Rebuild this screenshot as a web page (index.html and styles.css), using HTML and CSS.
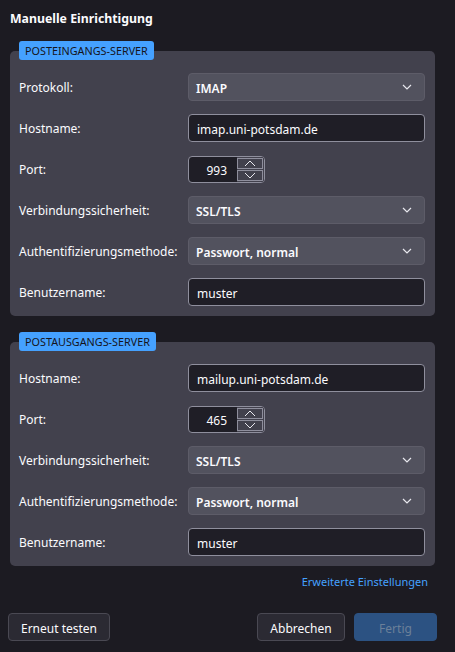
FILE: index.html
```html
<!DOCTYPE html>
<html lang="de">
<head>
<meta charset="utf-8">
<link rel="stylesheet" href="styles.css">
</head>
<body>
<div class="page">
  <h1 class="title">Manuelle Einrichtigung</h1>

  <section class="group">
    <span class="badge">POSTEINGANGS-SERVER</span>
    <div class="panel">
      <label class="label">Protokoll:</label>
      <div class="select"><span>IMAP</span><svg class="chev" width="10" height="6" viewBox="0 0 10 6"><path d="M1 1l4 4 4-4" fill="none" stroke="#e8e8ee" stroke-width="1.2"/></svg></div>

      <label class="label">Hostname:</label>
      <div class="input">imap.uni-potsdam.de</div>

      <label class="label">Port:</label>
      <div class="spin">
        <span class="spin-val">993</span>
        <span class="spin-btns">
          <span class="spin-btn"><svg width="12" height="7" viewBox="0 0 12 7"><path d="M1 6l5-5 5 5" fill="none" stroke="#e8e8ee" stroke-width="1"/></svg></span>
          <span class="spin-btn"><svg width="12" height="7" viewBox="0 0 12 7"><path d="M1 1l5 5 5-5" fill="none" stroke="#e8e8ee" stroke-width="1"/></svg></span>
        </span>
      </div>

      <label class="label">Verbindungssicherheit:</label>
      <div class="select"><span>SSL/TLS</span><svg class="chev" width="10" height="6" viewBox="0 0 10 6"><path d="M1 1l4 4 4-4" fill="none" stroke="#e8e8ee" stroke-width="1.2"/></svg></div>

      <label class="label">Authentifizierungsmethode:</label>
      <div class="select"><span>Passwort, normal</span><svg class="chev" width="10" height="6" viewBox="0 0 10 6"><path d="M1 1l4 4 4-4" fill="none" stroke="#e8e8ee" stroke-width="1.2"/></svg></div>

      <label class="label">Benutzername:</label>
      <div class="input">muster</div>
    </div>
  </section>

  <section class="group group-out">
    <span class="badge">POSTAUSGANGS-SERVER</span>
    <div class="panel">
      <label class="label">Hostname:</label>
      <div class="input">mailup.uni-potsdam.de</div>

      <label class="label">Port:</label>
      <div class="spin">
        <span class="spin-val">465</span>
        <span class="spin-btns">
          <span class="spin-btn"><svg width="12" height="7" viewBox="0 0 12 7"><path d="M1 6l5-5 5 5" fill="none" stroke="#e8e8ee" stroke-width="1"/></svg></span>
          <span class="spin-btn"><svg width="12" height="7" viewBox="0 0 12 7"><path d="M1 1l5 5 5-5" fill="none" stroke="#e8e8ee" stroke-width="1"/></svg></span>
        </span>
      </div>

      <label class="label">Verbindungssicherheit:</label>
      <div class="select"><span>SSL/TLS</span><svg class="chev" width="10" height="6" viewBox="0 0 10 6"><path d="M1 1l4 4 4-4" fill="none" stroke="#e8e8ee" stroke-width="1.2"/></svg></div>

      <label class="label">Authentifizierungsmethode:</label>
      <div class="select"><span>Passwort, normal</span><svg class="chev" width="10" height="6" viewBox="0 0 10 6"><path d="M1 1l4 4 4-4" fill="none" stroke="#e8e8ee" stroke-width="1.2"/></svg></div>

      <label class="label">Benutzername:</label>
      <div class="input">muster</div>
    </div>
  </section>

  <div class="link-row"><a class="link">Erweiterte Einstellungen</a></div>

  <div class="buttons">
    <button class="btn btn-retry">Erneut testen</button>
    <span class="spacer"></span>
    <button class="btn btn-cancel">Abbrechen</button>
    <button class="btn btn-primary">Fertig</button>
  </div>
</div>
</body>
</html>
```

FILE: styles.css
```css
* { box-sizing: border-box; }
html, body {
  margin: 0;
  padding: 0;
  background: #1c1b22;
  color: #fbfbfe;
  font-family: "Noto Sans", "Open Sans", sans-serif;
  font-size: 12px;
}
.page {
  width: 455px;
  height: 652px;
  padding: 10px 0 0 0;
  display: flex;
  flex-direction: column;
}
.title {
  margin: 0 0 13px 10px;
  font-size: 12.3px;
  font-weight: 700;
  line-height: 18px;
}
.group {
  display: flex;
  flex-direction: column;
  align-items: flex-start;
  margin: 0 20px 0 10px;
}
.group-out { margin-top: 16px; }
.badge {
  position: relative;
  z-index: 1;
  margin-left: 9px;
  margin-bottom: -9px;
  height: 19px;
  line-height: 19px;
  padding: 0 6px;
  border-radius: 3px;
  background: #45a1ff;
  color: #15141a;
  font-size: 10.8px;
  font-weight: 400;
}
.panel {
  align-self: stretch;
  background: #42414d;
  border-radius: 5px;
  padding: 22px 10px 10px 9px;
  display: grid;
  grid-template-columns: 169px 1fr;
  grid-auto-rows: 28px;
  row-gap: 13px;
  align-items: center;
}
.label {
  line-height: 18px;
  padding-top: 2px;
  white-space: nowrap;
}
.select {
  height: 28px;
  background: #52525e;
  border: 1px solid #5d5c68;
  border-radius: 4px;
  display: flex;
  align-items: center;
  justify-content: space-between;
  padding: 2px 12px 0 7px;
  font-weight: 600;
}
.chev { display: block; margin-top: -2px; }
.input {
  height: 28px;
  background: #1f1e26;
  border: 1px solid #8f8f9d;
  border-radius: 4px;
  display: flex;
  align-items: center;
  padding: 2px 8px 0;
}
.spin {
  width: 77px;
  height: 27px;
  background: #1f1e26;
  border: 1px solid #8f8f9d;
  border-radius: 4px;
  display: flex;
  align-items: stretch;
}
.spin-val {
  width: 48px;
  display: flex;
  align-items: center;
  justify-content: flex-end;
  padding: 2px 10px 0 0;
}
.spin-btns {
  flex: 1;
  display: flex;
  flex-direction: column;
  padding: 1px 1px 1px 0;
  gap: 1px;
  background: #42414d;
  border-radius: 0 3px 3px 0;
}
.spin-btn {
  flex: 1;
  display: flex;
  align-items: center;
  justify-content: center;
  border: 1px solid #8f8f9d;
  background: #42414d;
}
.spin-btn svg { display: block; }
.link-row {
  display: flex;
  justify-content: flex-end;
  padding-right: 27px;
  margin-top: 7px;
}
.link {
  color: #45a1ff;
  font-size: 11px;
  line-height: 18px;
}
.buttons {
  display: flex;
  align-items: center;
  gap: 9px;
  padding: 0 18px 0 8px;
  margin-top: 22px;
}
.spacer { flex: 1; }
.btn {
  height: 28px;
  font-family: inherit;
  font-size: 12px;
  color: #fbfbfe;
  background: #2b2a33;
  border: 1px solid #4a4953;
  border-radius: 4px;
  padding: 2px 0 0;
  white-space: nowrap;
}
.btn-retry { width: 102px; }
.btn-cancel { width: 88px; }
.btn-primary {
  width: 83px;
  background: #2c5282;
  border-color: #2c5282;
  color: #6b8099;
}
```
